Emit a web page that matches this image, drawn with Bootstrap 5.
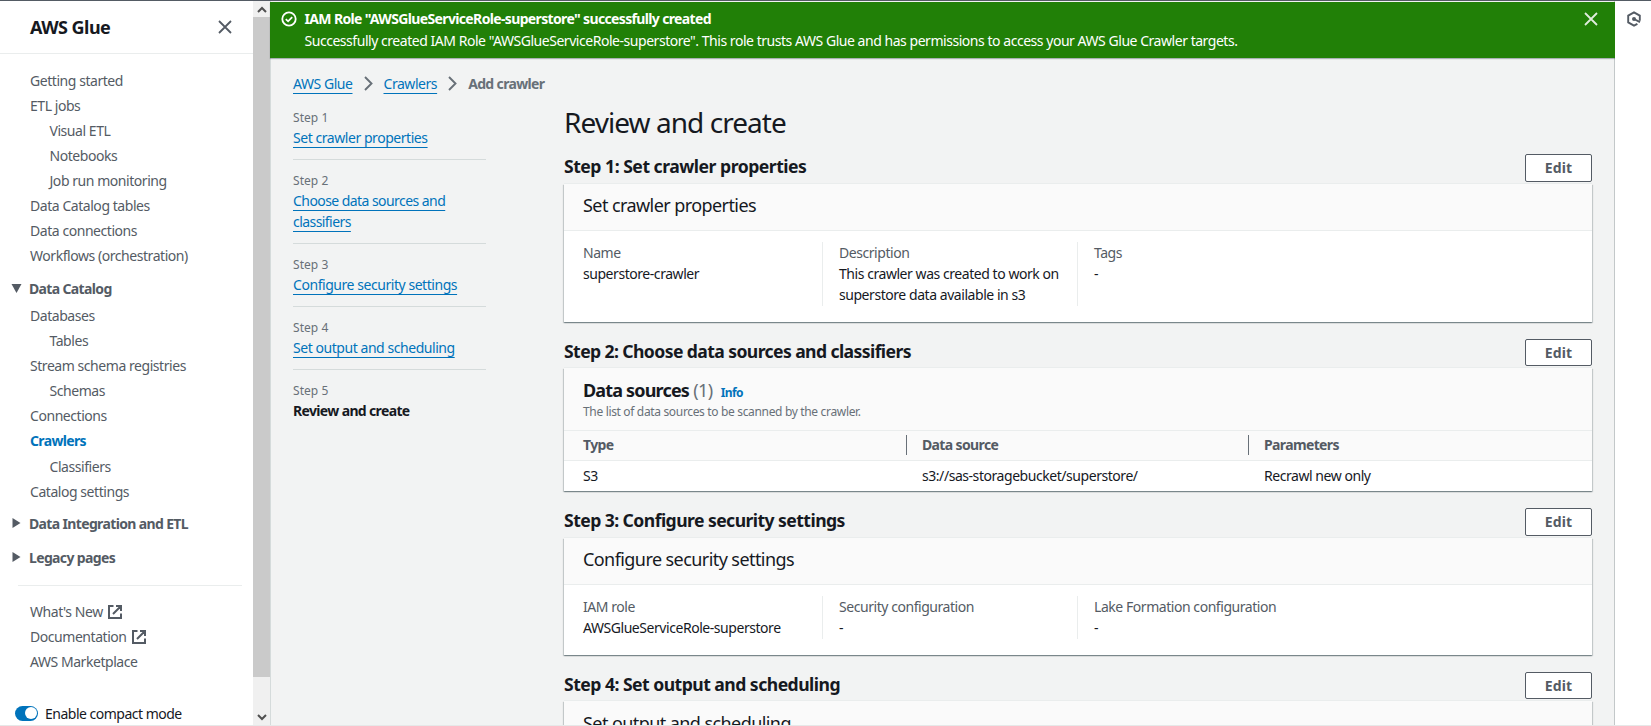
<!DOCTYPE html>
<html lang="en">
<head>
<meta charset="utf-8">
<title>AWS Glue - Add crawler</title>
<link href="https://cdn.jsdelivr.net/npm/bootstrap@5.3.0/dist/css/bootstrap.min.css" rel="stylesheet">
<style>
  body { font: 400 14px/21px "Noto Sans", sans-serif; letter-spacing: -.032em; color: #16191f; background: #f2f3f3; overflow: hidden; }
  b, strong, .bolder, th { font-weight: 700 !important; letter-spacing: -.046em; }
  svg { display: block; flex: none; fill: none; }
  .shell { height: 726px; border-top: 1px solid #545b64; border-bottom: 1px solid #e6e8e8; overflow: hidden; }
  .grey { color: #545b64; }
  .muted { color: #687078; }

  /* side navigation */
  .side { width: 253px; background: #fff; color: #545b64; }
  .side-head { height: 53px; padding: 0 21px 0 30px; border-bottom: 1px solid #eaeded; }
  .side-head h2 { font-size: 18px; line-height: 22px; color: #16191f; letter-spacing: -.03em; }
  .side ul { padding-left: 30px; margin: 0; line-height: 25.12px; }
  .side ul.first { padding-top: 13.6px; }
  .side li { height: 25.12px; }
  .side li.sub { padding-left: 19.5px; }
  .side li.current { color: #0073bb; }
  .group { height: 33.5px; padding: 5px 0 0 11px; }
  .group.top { height: 34.4px; }
  .group svg { width: 11px; margin-right: 7px; }
  .side hr { margin: 13px 11px 13.5px 18px; opacity: 1; border-top: 1px solid #eaeded; }
  .compact { padding: 28.5px 0 0 15px; color: #16191f; }
  .compact span { margin-left: 7px; letter-spacing: -.036em; }
  .toggle-track { width: 23px; height: 15px; border-radius: 8px; background: #0073bb; padding: 1.5px; }
  .toggle-knob { width: 12px; height: 12px; border-radius: 50%; background: #fff; }
  .scroller { width: 17px; background: #f0f0f0; }
  .scroller .thumb { height: 660px; background: #cacaca; }
  .scroller .cap { height: 16px; }

  /* success banner */
  .workspace { border-left: 1px solid #d5dbdb; border-right: 1px solid #c3c8c9; }
  .flash { height: 55.5px; margin: 1px -1px 0; padding: 6px 17px 0 11px; background: #218007; color: #fff; box-shadow: 0 1px 1px 0 rgba(0,28,36,.3); }
  .flash p { margin: 0; line-height: 22px; }
  .flash .status { margin: 3px 7.5px 0 0; }
  .flash .dismiss { margin-top: 4px; }

  /* wizard */
  .page { padding: 15px 22px 0 22px; }
  a { color: #0073bb; text-decoration: underline; text-decoration-thickness: 1px; text-underline-offset: 3.5px; text-decoration-skip-ink: none; }
  .crumbs { gap: 11px; height: 22px; }
  .steps { width: 193px; margin: 2.5px 78px 0 0; }
  .steps li { padding: 10.5px 0 11.5px; border-bottom: 1px solid #d5dbdb; }
  .steps li:last-child { border: 0; }
  .steps small { display: block; font-size: 12px; line-height: 19px; color: #687078; letter-spacing: .005em; }
  h1 { font-size: 28px; line-height: 36px; font-weight: 400; letter-spacing: -.034em; margin: 9.5px 0 14px; }
  .sect { height: 29.5px; }
  .sect h2 { font-size: 17.6px; line-height: 25px; margin: 0; letter-spacing: -.032em; }
  .btn-edit { width: 67px; height: 27.5px; padding: 0; border: 1px solid #545b64; border-radius: 2px; background: #fff; color: #545b64; font-size: 14px; line-height: 25px; letter-spacing: .01em; }
  .panel { background: #fff; margin-bottom: 17px; box-shadow: 0 1px 1px 0 rgba(0,28,36,.3), 1px 1px 1px 0 rgba(0,28,36,.15), -1px 1px 1px 0 rgba(0,28,36,.15), 0 -1px 0 0 #eaeded; }
  .panel-head { height: 47px; padding: 8.5px 19px 0; background: #fafafa; border-bottom: 1px solid #eaeded; }
  .panel-head h3 { font-size: 18px; line-height: 26px; font-weight: 400; margin: 0; letter-spacing: -.032em; }
  .panel-head.tall { height: 62.5px; }
  .panel-head .info { font-size: 12px; color: #0073bb; letter-spacing: -.05em; }
  .panel-head .about { font-size: 12px; line-height: 11px; letter-spacing: -.028em; }
  .facts { display: grid; grid-template-columns: 239px 255px 1fr; padding: 11px 0 16px 19px; line-height: 21.4px; }
  .facts > div + div { border-left: 1px solid #eaeded; padding-left: 16px; }
  .grid-table { width: 100%; table-layout: fixed; }
  .grid-table th { background: #fafafa; color: #545b64; height: 29.5px; border-bottom: 1px solid #eaeded; padding: 0; letter-spacing: -.045em; }
  .grid-table th span { display: block; line-height: 20px; padding-left: 19px; }
  .grid-table th + th span { border-left: 1px solid #687078; padding-left: 15px; }
  .grid-table td { height: 31px; padding: 0 0 0 16px; }
  .grid-table td:first-child { padding-left: 19px; }
  .rail { width: 36px; background: #fff; padding: 10px 0 0 11px; }
</style>
</head>
<body>
<div class="shell d-flex">
  <nav class="side flex-shrink-0">
    <div class="side-head d-flex align-items-center justify-content-between">
      <h2 class="bolder m-0">AWS Glue</h2>
      <svg width="14" height="14" viewBox="0 0 14 14" stroke="#545b64" stroke-width="1.8"><path d="M1 1l12 12M13 1L1 13"/></svg>
    </div>
    <ul class="list-unstyled first">
      <li>Getting started</li><li>ETL jobs</li>
      <li class="sub">Visual ETL</li><li class="sub">Notebooks</li><li class="sub">Job run monitoring</li>
      <li>Data Catalog tables</li><li>Data connections</li><li>Workflows (orchestration)</li>
    </ul>
    <div class="group top d-flex align-items-center bolder"><svg width="11" height="9" viewBox="0 0 11 9"><path d="M.5 0h10l-5 9z" fill="#545b64"/></svg>Data Catalog</div>
    <ul class="list-unstyled">
      <li>Databases</li><li class="sub">Tables</li><li>Stream schema registries</li><li class="sub">Schemas</li><li>Connections</li>
      <li class="current bolder">Crawlers</li><li class="sub">Classifiers</li><li>Catalog settings</li>
    </ul>
    <div class="group top d-flex align-items-center bolder"><svg width="11" height="10" viewBox="0 0 11 10"><path d="M1.5 0v10l8-5z" fill="#545b64"/></svg>Data Integration and ETL</div>
    <div class="group d-flex align-items-center bolder"><svg width="11" height="10" viewBox="0 0 11 10"><path d="M1.5 0v10l8-5z" fill="#545b64"/></svg>Legacy pages</div>
    <hr>
    <ul class="list-unstyled">
      <li class="d-flex align-items-center">What's New<svg class="ms-1" width="16" height="16" viewBox="0 0 16 16" stroke="#545b64" stroke-width="2"><path d="M6.5 2H2v12h12V9.5M9 2h5v5M14 2L6 10"/></svg></li>
      <li class="d-flex align-items-center">Documentation<svg class="ms-1" width="16" height="16" viewBox="0 0 16 16" stroke="#545b64" stroke-width="2"><path d="M6.5 2H2v12h12V9.5M9 2h5v5M14 2L6 10"/></svg></li>
      <li>AWS Marketplace</li>
    </ul>
    <div class="compact d-flex align-items-center">
      <div class="toggle-track d-flex justify-content-end"><div class="toggle-knob"></div></div><span>Enable compact mode</span>
    </div>
  </nav>
  <div class="scroller flex-shrink-0 d-flex flex-column">
    <div class="cap d-flex justify-content-center align-items-center"><svg width="10" height="7" viewBox="0 0 10 7" stroke="#505050" stroke-width="2"><path d="M1 6l4-4 4 4"/></svg></div>
    <div class="thumb"></div>
    <div class="cap d-flex justify-content-center align-items-center mt-auto"><svg width="10" height="7" viewBox="0 0 10 7" stroke="#505050" stroke-width="2"><path d="M1 1l4 4 4-4"/></svg></div>
  </div>

  <main class="workspace flex-grow-1">
    <div class="flash d-flex">
      <svg class="status" width="16" height="16" viewBox="0 0 16 16" stroke="#fff" stroke-width="1.8"><circle cx="8" cy="8" r="6.7"/><path d="M4.8 8.1l2.3 2.2 4.1-4.2"/></svg>
      <div class="flex-grow-1">
        <p class="bolder">IAM Role "AWSGlueServiceRole-superstore" successfully created</p>
        <p style="letter-spacing:-.033em">Successfully created IAM Role "AWSGlueServiceRole-superstore". This role trusts AWS Glue and has permissions to access your AWS Glue Crawler targets.</p>
      </div>
      <svg class="dismiss" width="14" height="14" viewBox="0 0 14 14" stroke="#e0ecdd" stroke-width="1.8"><path d="M1 1l12 12M13 1L1 13"/></svg>
    </div>
    <div class="page">
      <div class="crumbs d-flex align-items-center">
        <a href="#">AWS Glue</a>
        <svg width="9" height="15" viewBox="0 0 9 15" stroke="#687078" stroke-width="1.9"><path d="M1 1l6.5 6.5L1 14"/></svg>
        <a href="#">Crawlers</a>
        <svg width="9" height="15" viewBox="0 0 9 15" stroke="#687078" stroke-width="1.9"><path d="M1 1l6.5 6.5L1 14"/></svg>
        <span class="bolder muted">Add crawler</span>
      </div>
      <div class="d-flex">
        <ul class="steps list-unstyled flex-shrink-0">
          <li><small>Step 1</small><a href="#">Set crawler properties</a></li>
          <li><small>Step 2</small><a href="#" style="letter-spacing:-.04em">Choose data sources and classifiers</a></li>
          <li><small>Step 3</small><a href="#">Configure security settings</a></li>
          <li><small>Step 4</small><a href="#">Set output and scheduling</a></li>
          <li><small>Step 5</small><b>Review and create</b></li>
        </ul>
        <div class="flex-grow-1">
          <h1>Review and create</h1>

          <div class="sect d-flex justify-content-between align-items-start"><h2 class="bolder" style="letter-spacing:-.028em">Step 1: Set crawler properties</h2><button class="btn btn-edit bolder">Edit</button></div>
          <section class="panel">
            <div class="panel-head"><h3>Set crawler properties</h3></div>
            <div class="facts">
              <div><div class="grey">Name</div>superstore-crawler</div>
              <div><div class="grey">Description</div>This crawler was created to work on<br>superstore data available in s3</div>
              <div><div class="grey">Tags</div>-</div>
            </div>
          </section>

          <div class="sect d-flex justify-content-between align-items-start"><h2 class="bolder" style="letter-spacing:-.034em">Step 2: Choose data sources and classifiers</h2><button class="btn btn-edit bolder">Edit</button></div>
          <section class="panel">
            <div class="panel-head tall">
              <h3><b>Data sources</b> <span class="muted">(1)</span> <span class="bolder info ms-1">Info</span></h3>
              <div class="about muted">The list of data sources to be scanned by the crawler.</div>
            </div>
            <table class="grid-table">
              <colgroup><col style="width:342px"><col style="width:342px"><col></colgroup>
              <thead><tr><th><span>Type</span></th><th><span>Data source</span></th><th><span>Parameters</span></th></tr></thead>
              <tbody><tr><td>S3</td><td>s3://sas-storagebucket/superstore/</td><td>Recrawl new only</td></tr></tbody>
            </table>
          </section>

          <div class="sect d-flex justify-content-between align-items-start"><h2 class="bolder">Step 3: Configure security settings</h2><button class="btn btn-edit bolder">Edit</button></div>
          <section class="panel">
            <div class="panel-head"><h3>Configure security settings</h3></div>
            <div class="facts">
              <div><div class="grey">IAM role</div>AWSGlueServiceRole-superstore</div>
              <div><div class="grey">Security configuration</div>-</div>
              <div><div class="grey">Lake Formation configuration</div>-</div>
            </div>
          </section>

          <div class="sect d-flex justify-content-between align-items-start"><h2 class="bolder" style="letter-spacing:-.03em">Step 4: Set output and scheduling</h2><button class="btn btn-edit bolder">Edit</button></div>
          <section class="panel">
            <div class="panel-head"><h3>Set output and scheduling</h3></div>
          </section>
        </div>
      </div>
    </div>
  </main>
  <aside class="rail flex-shrink-0">
    <svg width="16" height="16" viewBox="0 0 16 16" stroke="#545b64" stroke-width="1.9"><path d="M13.8 9.8V4.6L8 1.3 2.2 4.6v6.8L8 14.7l3.4-1.9"/><circle cx="8" cy="8" r="2" fill="#545b64" stroke="none"/><path d="M8 8l6 3.2"/></svg>
  </aside>
</div>
<script src="https://cdn.jsdelivr.net/npm/bootstrap@5.3.0/dist/js/bootstrap.bundle.min.js"></script>
</body>
</html>
